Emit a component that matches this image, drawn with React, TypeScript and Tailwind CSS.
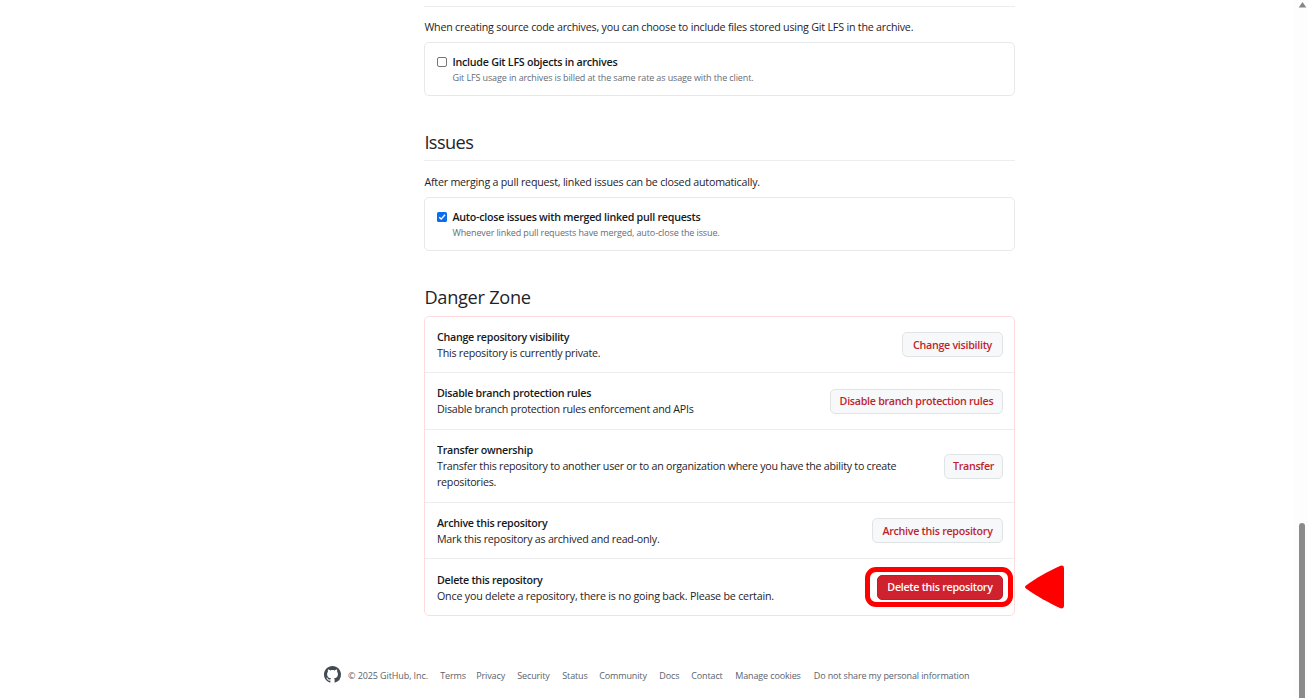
import React from "react";

const footerLinks = [
  { label: "Terms", width: "w-[24px]" },
  { label: "Privacy", width: "w-[29px]" },
  { label: "Security", width: "w-[33px]" },
  { label: "Status", width: "w-[25px]" },
  { label: "Community", width: "w-[48px]" },
  { label: "Docs", width: "w-[20px]" },
  { label: "Contact", width: "w-[32px]" },
  { label: "Manage cookies", width: "w-[66.5px]" },
  { label: "Do not share my personal information", width: "w-[156px]" },
];

function Option({ title, note, checked = false }: { title: string; note: string; checked?: boolean }) {
  return (
    <div className="flex h-[54px] rounded-[5px] border border-[#e6e8eb] pl-3 pt-[12px]">
      {checked ? (
        <svg className="mt-[2px] h-[10px] w-[10px] shrink-0" viewBox="0 0 10 10">
          <rect width="10" height="10" rx="1.6" fill="#0b6cf0" />
          <path d="M2.2 5.2 4.2 7.1 8 2.8" fill="none" stroke="#fff" strokeWidth="1.4" />
        </svg>
      ) : (
        <div className="mt-[2px] h-[10px] w-[10px] shrink-0 rounded-[2px] border border-[#767676] bg-white" />
      )}
      <div className="ml-[5.5px]">
        <div className="h-[15px] text-[10.7px] font-semibold leading-[15px] tracking-[-0.26px] text-[#15191e]">{title}</div>
        <div className="h-[15px] text-[9px] leading-[15px] tracking-[-0.12px] text-[#656d76]">{note}</div>
      </div>
    </div>
  );
}

function DangerRow({
  title,
  lines,
  action,
  height,
  buttonSize,
  tracking = "tracking-[-0.25px]",
  primary = false,
}: {
  title: string;
  lines: string[];
  action: string;
  height: string;
  buttonSize: string;
  tracking?: string;
  primary?: boolean;
}) {
  return (
    <div className={`flex items-center justify-between border-[#ebedef] pl-3 pr-[11px] ${height}`}>
      <div className={`text-[10.7px] leading-4 text-[#1f2328] ${tracking} ${primary ? "pt-[2px]" : ""}`}>
        <div className="font-semibold tracking-[-0.27px] text-[#15191e]">{title}</div>
        {lines.map((line) => (
          <div key={line}>{line}</div>
        ))}
      </div>
      <div className="relative">
        <button
          className={`block h-[25px] rounded-[5px] border text-[10.7px] font-semibold tracking-[-0.28px] ${buttonSize} ${
            primary ? "border-[#c01c2b] bg-[#cf222e] text-white" : "border-[#e1e4e7] bg-[#f6f8fa] text-[#c01f2e]"
          }`}
        >
          {action}
        </button>
        {primary && (
          <>
            <div className="absolute -left-[12px] -top-[8px] h-[40px] w-[148px] rounded-[11px] border-[5px] border-[#fe0000]" />
            <svg className="absolute -top-[10px] left-[148px] h-[44px] w-[39px]" viewBox="0 0 39 44">
              <path d="M1 20.4Q-1 22 1 23.6C11 31 24 38 35.500 43.300Q39 44 39 41V3Q39 0 35.500 .7C24 6 11 13 1 20.400Z" fill="#fe0000" />
            </svg>
          </>
        )}
      </div>
    </div>
  );
}

export default function App() {
  return (
    <div className="flex h-[698px] w-[1308px] justify-between overflow-hidden bg-white font-['Open_Sans','Noto_Sans',sans-serif] whitespace-nowrap">
      <div className="w-[1294px]">
        <main className="ml-[424px] w-[591px] text-[10.7px] text-[#1f2328]">
          <div className="h-[7px] border-b border-[#ebedef]" />
          <p className="mb-[7px] mt-3 h-4 pl-[0.4px] leading-4 tracking-[-0.21px]">
            When creating source code archives, you can choose to include files stored using Git LFS in the archive.
          </p>
          <Option
            title="Include Git LFS objects in archives"
            note="Git LFS usage in archives is billed at the same rate as usage with the client."
          />
          <h2 className="mt-[32px] h-[33px] border-b border-[#ebedef] pl-[0.4px] text-[18.2px] leading-[28px] tracking-[-0.6px]">
            Issues
          </h2>
          <p className="mb-[7px] mt-[13px] h-4 pl-[0.4px] leading-4 tracking-[-0.22px]">
            After merging a pull request, linked issues can be closed automatically.
          </p>
          <Option
            checked
            title="Auto-close issues with merged linked pull requests"
            note="Whenever linked pull requests have merged, auto-close the issue."
          />
          <h2 className="mt-[32px] h-[33px] pl-[0.4px] text-[18.2px] leading-[28px] tracking-[-0.28px]">Danger Zone</h2>
          <section className="rounded-[5px] border border-[#ffdcdc]">
            <DangerRow
              title="Change repository visibility"
              lines={["This repository is currently private."]}
              action="Change visibility"
              height="h-[56px] border-b"
              buttonSize="w-[101px] leading-[24px]"
            />
            <DangerRow
              title="Disable branch protection rules"
              lines={["Disable branch protection rules enforcement and APIs"]}
              action="Disable branch protection rules"
              height="h-[57px] border-b"
              buttonSize="w-[173px] leading-[23px]"
            />
            <DangerRow
              title="Transfer ownership"
              lines={[
                "Transfer this repository to another user or to an organization where you have the ability to create",
                "repositories.",
              ]}
              action="Transfer"
              height="h-[73px] border-b"
              buttonSize="w-[59px] leading-[23px]"
            />
            <DangerRow
              title="Archive this repository"
              lines={["Mark this repository as archived and read-only."]}
              action="Archive this repository"
              height="h-[56px] border-b"
              buttonSize="w-[131px] leading-[24px]"
            />
            <DangerRow
              title="Delete this repository"
              lines={["Once you delete a repository, there is no going back. Please be certain."]}
              action="Delete this repository"
              height="h-[56px]"
              buttonSize="w-[126px] leading-[23px]"
              tracking="tracking-[-0.2px]"
              primary
            />
          </section>
        </main>
        <footer className="ml-[324px] mt-[50px] flex h-[17px] items-center text-[9px] leading-[17px] tracking-[-0.14px] text-[#59636e]">
          <svg className="h-[17px] w-[17px]" viewBox="0 0 16 16" fill="#424a53">
            <path d="M8 0C3.58 0 0 3.58 0 8c0 3.54 2.29 6.53 5.47 7.59.4.07.55-.17.55-.38 0-.19-.01-.82-.01-1.49-2.01.37-2.53-.49-2.69-.94-.09-.23-.48-.94-.82-1.13-.28-.15-.68-.52-.01-.53.63-.01 1.08.58 1.23.82.72 1.21 1.87.87 2.33.66.07-.52.28-.87.51-1.07-1.78-.2-3.64-.89-3.64-3.95 0-.87.31-1.59.82-2.15-.08-.2-.36-1.02.08-2.12 0 0 .67-.21 2.2.82.64-.18 1.32-.27 2-.27s1.36.09 2 .27c1.53-1.04 2.2-.82 2.2-.82.44 1.1.16 1.92.08 2.12.51.56.82 1.27.82 2.15 0 3.07-1.87 3.75-3.65 3.95.29.25.54.73.54 1.48 0 1.07-.01 1.93-.01 2.2 0 .21.15.46.55.38A8.01 8.01 0 0 0 16 8c0-4.42-3.58-8-8-8Z" />
          </svg>
          <span className="ml-[7px] w-[80px] pt-[1px] tracking-[-0.1px]">© 2025 GitHub, Inc.</span>
          <nav className="ml-[12.3px] flex gap-3 pt-[1px]">
            {footerLinks.map((link) => (
              <a key={link.label} className={link.width}>
                {link.label}
              </a>
            ))}
          </nav>
        </footer>
      </div>
      <div className="flex w-[14px] flex-col items-center justify-between bg-[#fdfdfd]">
        <svg className="ml-[2px] mt-[1px] h-[7px] w-[9px]" viewBox="0 0 9 7">
          <path d="M4.500 1 8.300 6.500H.7Z" fill="#858585" />
        </svg>
        <div className="ml-[2px] h-[175px] w-[6px] rounded-t-[3px] bg-[#8b8b8b]" />
      </div>
    </div>
  );
}
